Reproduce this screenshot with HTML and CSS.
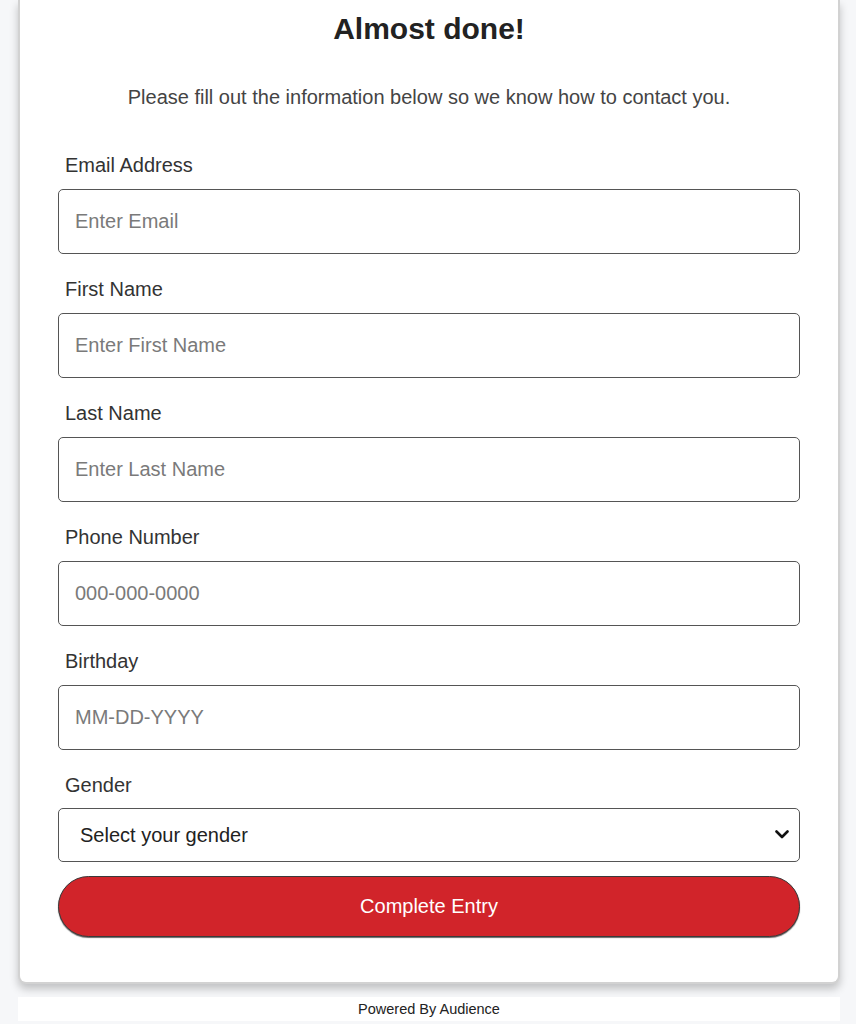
FILE: index.html
```html
<!DOCTYPE html>
<html lang="en">
<head>
<meta charset="utf-8">
<title>Almost done!</title>
<link rel="stylesheet" href="styles.css">
</head>
<body>
<div class="page">
  <div class="card">
    <h1 class="title">Almost done!</h1>
    <p class="subtitle">Please fill out the information below so we know how to contact you.</p>
    <form class="form">
      <div class="field">
        <label class="label" for="email">Email Address</label>
        <input class="input" id="email" type="text" placeholder="Enter Email">
      </div>
      <div class="field">
        <label class="label" for="first">First Name</label>
        <input class="input" id="first" type="text" placeholder="Enter First Name">
      </div>
      <div class="field">
        <label class="label" for="last">Last Name</label>
        <input class="input" id="last" type="text" placeholder="Enter Last Name">
      </div>
      <div class="field">
        <label class="label" for="phone">Phone Number</label>
        <input class="input" id="phone" type="text" placeholder="000-000-0000">
      </div>
      <div class="field">
        <label class="label" for="bday">Birthday</label>
        <input class="input" id="bday" type="text" placeholder="MM-DD-YYYY">
      </div>
      <div class="field field-last">
        <label class="label label-gender" for="gender">Gender</label>
        <div class="select-wrap">
          <select class="select" id="gender">
            <option>Select your gender</option>
            <option>Male</option>
            <option>Female</option>
            <option>Other</option>
          </select>
          <svg class="chevron" width="14" height="9" viewBox="0 0 14 9" aria-hidden="true">
            <path d="M1.5 1.5 L7 7 L12.5 1.5" fill="none" stroke="#111" stroke-width="2.6" stroke-linecap="round" stroke-linejoin="round"/>
          </svg>
        </div>
      </div>
      <button class="submit" type="button">Complete Entry</button>
    </form>
  </div>
  <div class="footer">Powered By Audience</div>
</div>
</body>
</html>
```

FILE: styles.css
```css
* { box-sizing: border-box; }

html, body {
  margin: 0;
  padding: 0;
  background: #f6f7f9;
  font-family: "Liberation Sans", Arial, sans-serif;
}

.page {
  width: 822px;
  margin-left: 18px;
}

.card {
  background: #ffffff;
  border: 2px solid #d2d2d2;
  border-top: none;
  border-radius: 0 0 8px 8px;
  box-shadow: 0 5px 8px rgba(0, 0, 0, 0.22);
  padding: 11px 38px 45px;
}

.title {
  margin: 0;
  text-align: center;
  font-size: 30px;
  line-height: 36px;
  font-weight: bold;
  color: #222222;
}

.subtitle {
  margin: 38px 0 0;
  text-align: center;
  font-size: 20px;
  line-height: 24px;
  color: #444444;
}

.form {
  margin-top: 44px;
  display: flex;
  flex-direction: column;
}

.field {
  display: flex;
  flex-direction: column;
  margin-bottom: 23px;
}

.field-last {
  margin-bottom: 14px;
}

.label {
  font-size: 20px;
  line-height: 24px;
  color: #333333;
  padding-left: 7px;
  margin-bottom: 12px;
}

.label-gender {
  margin-bottom: 11px;
}

.input {
  width: 100%;
  height: 65px;
  border: 1px solid #555555;
  border-radius: 5px;
  padding: 0 16px;
  font-family: "Liberation Sans", Arial, sans-serif;
  font-size: 20px;
  color: #222222;
  background: #ffffff;
  outline: none;
}

.input::placeholder {
  color: #7a7a7a;
}

.select-wrap {
  position: relative;
}

.select {
  width: 100%;
  height: 54px;
  border: 1px solid #555555;
  border-radius: 5px;
  padding: 0 40px 0 21px;
  font-family: "Liberation Sans", Arial, sans-serif;
  font-size: 20px;
  color: #222222;
  background: #ffffff;
  -webkit-appearance: none;
  appearance: none;
  outline: none;
}

.chevron {
  position: absolute;
  right: 11px;
  top: 22px;
  pointer-events: none;
}

.submit {
  width: 100%;
  height: 61px;
  border: 1px solid #3a3a3a;
  border-radius: 31px;
  background: #d1242a;
  box-shadow: 0 1px 1px rgba(0, 0, 0, 0.6);
  color: #ffffff;
  font-family: "Liberation Sans", Arial, sans-serif;
  font-size: 20px;
  cursor: pointer;
}

.footer {
  margin-top: 13px;
  height: 24px;
  background: #ffffff;
  text-align: center;
  font-size: 14.5px;
  line-height: 24px;
  color: #222222;
}
```
